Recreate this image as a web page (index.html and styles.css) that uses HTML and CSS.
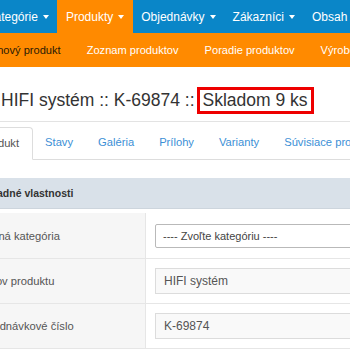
FILE: index.html
```html
<!DOCTYPE html>
<html lang="sk">
<head>
    <meta charset="UTF-8">
    <meta name="viewport" content="width=device-width, initial-scale=1.0">
    <title>HIFI systém</title>
    <link rel="stylesheet" href="styles.css">
</head>
<body>
    <div class="page">
        <!-- Hlavné menu -->
        <ul class="topbar">
            <li class="menu-item">Kategórie <span class="caret"></span></li>
            <li class="menu-item active">Produkty <span class="caret"></span></li>
            <li class="menu-item">Objednávky <span class="caret"></span></li>
            <li class="menu-item">Zákazníci <span class="caret"></span></li>
            <li class="menu-item">Obsah <span class="caret"></span></li>
        </ul>

        <!-- Podmenu -->
        <ul class="subbar">
            <li class="sub-item current">Pridať nový produkt</li>
            <li class="sub-item">Zoznam produktov</li>
            <li class="sub-item">Poradie produktov</li>
            <li class="sub-item">Výrobcovia</li>
        </ul>

        <div class="title-row">
            <h1 class="title">HIFI systém :: K-69874 ::<span class="stock">Skladom 9 ks</span></h1>
        </div>

        <ul class="tabs">
            <li class="tab active">Produkt</li>
            <li class="tab">Stavy</li>
            <li class="tab">Galéria</li>
            <li class="tab">Prílohy</li>
            <li class="tab">Varianty</li>
            <li class="tab">Súvisiace produkty</li>
        </ul>

        <div class="panel">
            <div class="panel-head">Základné vlastnosti</div>
            <div class="form-row first">
                <div class="label">Hlavná kategória</div>
                <div class="field">
                    <div class="select">---- Zvoľte kategóriu ----</div>
                </div>
            </div>
            <div class="form-row">
                <div class="label">Názov produktu</div>
                <div class="field">
                    <div class="input">HIFI systém</div>
                </div>
            </div>
            <div class="form-row">
                <div class="label">Objednávkové číslo</div>
                <div class="field">
                    <div class="input">K-69874</div>
                </div>
            </div>
        </div>
    </div>
</body>
</html>
```

FILE: styles.css
```css
/* Reset */
* {
    margin: 0;
    padding: 0;
    box-sizing: border-box;
}

html, body {
    overflow: hidden;
}

body {
    font-family: "Liberation Sans", Arial, sans-serif;
    background: #fff;
    color: #333;
    width: 350px;
}

ul {
    list-style: none;
}

/* Stránka je trochu posunutá doľava (výrez) */
.page {
    width: 440px;
    margin-left: -30px;
}

/* Hlavné menu */
.topbar {
    display: flex;
    height: 33px;
    background: #0a86c8;
    margin-left: 8px;
}

.menu-item {
    display: flex;
    align-items: center;
    gap: 5px;
    padding: 0 8.5px;
    color: #fff;
    font-size: 12px;
    white-space: nowrap;
}

.menu-item.active {
    background: #ff8a00;
}

.caret {
    width: 0;
    height: 0;
    border-left: 3.5px solid transparent;
    border-right: 3.5px solid transparent;
    border-top: 4px solid #fff;
}

/* Podmenu */
.subbar {
    display: flex;
    height: 34px;
    background: #ff8a00;
    margin-left: -19px;
}

.sub-item {
    display: flex;
    align-items: center;
    padding: 0 13px;
    color: #fff;
    font-size: 11.1px;
    white-space: nowrap;
}

.sub-item.current {
    color: #2a1a05;
}

/* Nadpis */
.title-row {
    margin-top: 20px;
    padding: 0 0 7px 31px;
    border-bottom: 1px solid #e3e3e3;
}

.title {
    display: flex;
    align-items: center;
    height: 27px;
    font-size: 17.5px;
    font-weight: normal;
    color: #333;
    white-space: pre;
}

.stock {
    border: 3px solid #ee0000;
    padding: 0 3px 0 3px;
    line-height: 21px;
    margin-left: 2px;
}

/* Záložky */
.tabs {
    display: flex;
    margin-top: 5px;
    margin-left: -3px;
    border-bottom: 1px solid #dddddd;
}

.tab {
    height: 32px;
    line-height: 31px;
    padding: 0 12.5px;
    font-size: 11.2px;
    color: #3b8fd6;
    white-space: nowrap;
}

.tab.active {
    color: #555;
    background: #fff;
    border: 1px solid #dddddd;
    border-bottom-color: #fff;
    border-radius: 4px 4px 0 0;
    margin-bottom: -1px;
    height: 33px;
}

/* Panel */
.panel {
    margin-top: 18px;
}

.panel-head {
    height: 31px;
    line-height: 30px;
    padding-left: 6px;
    background: #d9e1e9;
    border-bottom: 1px solid #cdd5dd;
    font-size: 10.5px;
    font-weight: bold;
    color: #333;
}

.form-row {
    display: grid;
    grid-template-columns: 176px 1fr;
    height: 45px;
    border-bottom: 1px solid #e6e6e6;
}

.form-row.first {
    height: 50px;
    border-top: 4px solid #fff;
}

.label {
    display: flex;
    align-items: center;
    padding-left: 6px;
    background: #f6f6f6;
    border-right: 1px solid #e6e6e6;
    font-size: 11.2px;
    color: #555;
    white-space: nowrap;
}

.field {
    display: flex;
    align-items: center;
    padding-left: 9px;
}

.select {
    width: 100%;
    height: 24px;
    line-height: 22px;
    padding-left: 7px;
    background: #fff;
    border: 1px solid #b9b9b9;
    border-radius: 2px;
    font-size: 11px;
    color: #444;
}

.input {
    width: 100%;
    height: 26px;
    line-height: 24px;
    padding-left: 8px;
    background: #f9f9f9;
    border: 1px solid #dcdcdc;
    font-size: 12px;
    color: #555;
}
```
